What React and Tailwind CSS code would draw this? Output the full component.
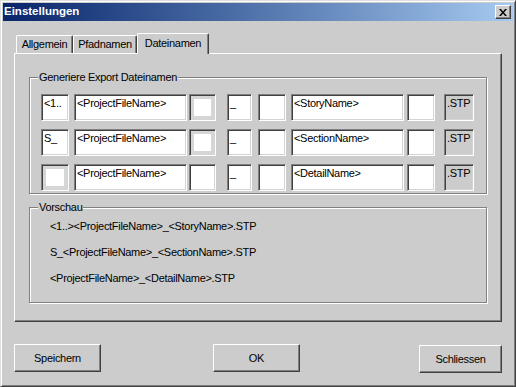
const sunken =
  'border border-t-[#808080] border-l-[#808080] border-r-white border-b-white shadow-[inset_1px_1px_0_#404040,inset_-1px_-1px_0_#d4d4d4]';
const raised =
  'border border-t-white border-l-white border-r-[#404040] border-b-[#404040] shadow-[inset_-1px_-1px_0_#808080]';
const etched = 'border border-[#808080] shadow-[inset_1px_1px_0_#ffffff,1px_1px_0_#ffffff]';

function Field({ w, text, ring, gray }) {
  if (ring) {
    return (
      <div className={`${w} h-[27px] p-[1px] bg-white ${sunken}`}>
        <div className="h-full border-[3px] border-[#d6d6d6] bg-white" />
      </div>
    );
  }
  return (
    <div
      className={`${w} h-[27px] pl-[2px] pt-[2px] leading-[13px] whitespace-nowrap overflow-hidden ${
        gray ? 'bg-[#cccccc]' : 'bg-white'
      } ${sunken}`}
    >
      {text}
    </div>
  );
}

function Row({ first, firstRing, midRing, name }) {
  return (
    <div className="flex">
      <Field w="w-[28px] ml-[11px]" text={first} ring={firstRing} />
      <Field w="w-[113px] ml-[5px]" text="<ProjectFileName>" />
      <Field w="w-[27px] ml-[2px]" ring={midRing} />
      <Field w="w-[25px] ml-[11px]" text="_" />
      <Field w="w-[28px] ml-[6px]" />
      <Field w="w-[113px] ml-[5px]" text={name} />
      <Field w="w-[28px] ml-[3px]" />
      <Field w="w-[30px] ml-[9px]" text=".STP" gray />
    </div>
  );
}

function Tab({ label, w, selected }) {
  return (
    <div
      className={`${w} flex items-center justify-center rounded-t-[2px] ${
        selected ? 'h-[21px] -mb-px relative z-10 bg-[#cccccc] pb-[2px]' : 'h-[18px]'
      } border-t border-l border-r border-t-white border-l-white border-r-[#404040] shadow-[inset_-1px_0_0_#808080]`}
    >
      {label}
    </div>
  );
}

function Button({ label, className }) {
  return (
    <div className={`h-[28px] flex items-center justify-center bg-[#cccccc] ${raised} ${className}`}>
      {label}
    </div>
  );
}

export default function App() {
  return (
    <div className="w-[516px] h-[387px] bg-[#cccccc] text-black text-[11px] tracking-[-0.3px] font-['Liberation_Sans',Arial,sans-serif] border border-t-[#dfdfdf] border-l-[#dfdfdf] border-r-[#404040] border-b-[#404040] shadow-[inset_1px_1px_0_#ffffff,inset_-1px_-1px_0_#808080] p-[2px] flex flex-col">
      {/* title bar */}
      <div className="h-[18px] flex items-center bg-linear-to-r from-[#0a246a] to-[#a6caf0] pl-[1px] pr-[2px]">
        <span className="text-white font-bold text-[11.5px] tracking-normal">Einstellungen</span>
        <div className={`ml-auto w-[16px] h-[14px] flex items-center justify-center bg-[#cccccc] ${raised}`}>
          <svg width="8" height="7" viewBox="0 0 8 7">
            <path d="M0 0h2l2 2.5L6 0h2L5 3.5 8 7H6L4 4.5 2 7H0l3-3.5z" fill="#000" />
          </svg>
        </div>
      </div>

      <div className="px-[11px] mt-[12px]">
        {/* tabs */}
        <div className="flex items-end h-[20px] pl-[2px]">
          <Tab label="Allgemein" w="w-[57px]" />
          <Tab label="Pfadnamen" w="w-[64px]" />
          <Tab label="Dateinamen" w="w-[72px]" selected />
        </div>

        {/* tab panel */}
        <div className={`h-[269px] pl-[14px] pt-[23px] ${raised}`}>
          <div className={`relative w-[458px] pt-[16px] pb-[2px] flex flex-col gap-[8px] ${etched}`}>
            <span className="absolute -top-[7px] left-[8px] px-[1px] leading-[13px] bg-[#cccccc]">
              Generiere Export Dateinamen
            </span>
            <Row first="<1.." midRing name="<StoryName>" />
            <Row first="S_" midRing name="<SectionName>" />
            <Row firstRing name="<DetailName>" />
          </div>

          <div className={`relative w-[458px] h-[96px] mt-[13px] pt-[5px] pl-[20px] ${etched}`}>
            <span className="absolute -top-[7px] left-[8px] px-[1px] leading-[13px] bg-[#cccccc]">Vorschau</span>
            <div className="leading-[26px]">&lt;1..&gt;&lt;ProjectFileName&gt;_&lt;StoryName&gt;.STP</div>
            <div className="leading-[26px]">S_&lt;ProjectFileName&gt;_&lt;SectionName&gt;.STP</div>
            <div className="leading-[26px]">&lt;ProjectFileName&gt;_&lt;DetailName&gt;.STP</div>
          </div>
        </div>

        {/* buttons */}
        <div className="flex items-start mt-[22px]">
          <Button label="Speichern" className="w-[87px]" />
          <Button label="OK" className="w-[87px] ml-[112px]" />
          <Button label="Schliessen" className="w-[83px] ml-auto mt-[1px]" />
        </div>
      </div>
    </div>
  );
}
